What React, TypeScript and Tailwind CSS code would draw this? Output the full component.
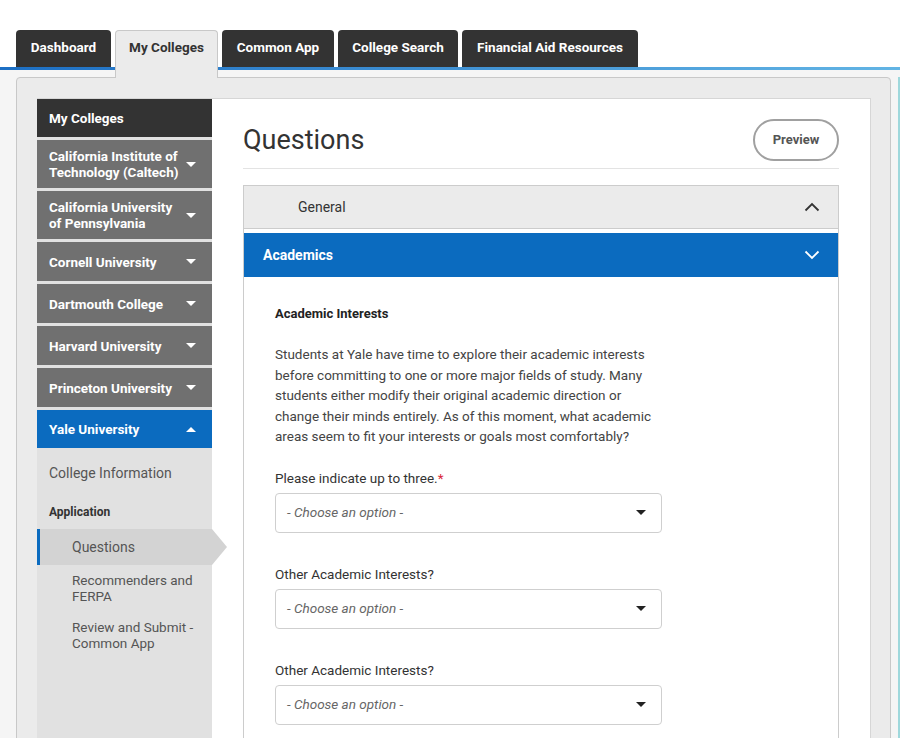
import React from "react";

const Caret = ({ up = false, color = "#ffffff" }: { up?: boolean; color?: string }) => (
  <svg width="10" height="5" viewBox="0 0 10 5" className="shrink-0">
    {up ? <path d="M0 5h10L5 0z" fill={color} /> : <path d="M0 0h10L5 5z" fill={color} />}
  </svg>
);

const Chevron = ({ up = false, color }: { up?: boolean; color: string }) => (
  <svg width="16" height="10" viewBox="0 0 16 10" className="shrink-0">
    {up ? (
      <polyline points="1.5,8.5 8,2 14.5,8.5" fill="none" stroke={color} strokeWidth="1.8" />
    ) : (
      <polyline points="1.5,1.5 8,8 14.5,1.5" fill="none" stroke={color} strokeWidth="1.8" />
    )}
  </svg>
);

const Select = () => (
  <div className="mt-[5px] w-[387px] h-[40px] border border-[#cfcfcf] rounded-[4px] bg-white flex items-center justify-between pl-[11px] pr-[15px]">
    <span className="italic text-[13.5px] text-[#666]">- Choose an option -</span>
    <Caret color="#222" />
  </div>
);

export default function App() {
  const tabs = [
    { label: "Dashboard", w: "w-[95px]" },
    { label: "My Colleges", w: "w-[103px]", active: true },
    { label: "Common App", w: "w-[112px]" },
    { label: "College Search", w: "w-[120px]" },
    { label: "Financial Aid Resources", w: "w-[176px]" },
  ];
  const colleges: { name: React.ReactNode; two?: boolean }[] = [
    { name: <>California Institute of<br />Technology (Caltech)</>, two: true },
    { name: <>California University<br />of Pennsylvania</>, two: true },
    { name: "Cornell University" },
    { name: "Dartmouth College" },
    { name: "Harvard University" },
    { name: "Princeton University" },
  ];
  return (
    <div className="w-[900px] h-[738px] overflow-hidden bg-[#f5f5f5] flex flex-col" style={{ fontFamily: "Roboto, 'Liberation Sans', sans-serif" }}>
      {/* Tabs */}
      <div className="shrink-0 bg-white pt-[30px]">
        <div className="flex items-start gap-[4px] pl-[16px] h-[37px]">
          {tabs.map((t) =>
            t.active ? (
              <div
                key={t.label}
                className={`${t.w} relative z-10 h-[48px] bg-[#ebebeb] border border-b-0 border-[#c8c8c8] rounded-t-[4px] text-center pt-[8px] text-[13.5px] leading-[16px] font-bold text-[#333]`}
              >
                {t.label}
              </div>
            ) : (
              <div
                key={t.label}
                className={`${t.w} h-[37px] bg-[#333333] rounded-t-[4px] text-center pt-[9px] text-[13.5px] leading-[16px] font-bold text-white`}
              >
                {t.label}
              </div>
            )
          )}
        </div>
      </div>
      <div className="shrink-0 h-[3px] bg-gradient-to-r from-[#1c6fc4] to-[#62b4e4]" />
      {/* Panel */}
      <div className="shrink-0 flex pt-[7px]">
        <div className="ml-[16px] w-[875px] h-[700px] bg-[#ebebeb] border border-[#c8c8c8] rounded-[4px] pt-[20px] pl-[20px] pr-[19px]">
          <div className="flex h-full border-t border-r border-[#d6d6d6] bg-white">
            {/* Sidebar */}
            <div className="w-[175px] shrink-0 bg-[#e1e1e1] flex flex-col relative z-10">
              <div className="h-[38px] bg-[#333333] flex items-center pl-[12px] text-[13.5px] font-bold text-white">My Colleges</div>
              {colleges.map((c, i) => (
                <div
                  key={i}
                  className={`mt-[3px] ${c.two ? "h-[48px]" : "h-[39px]"} bg-[#707070] flex items-center justify-between pl-[12px] pr-[16px] text-[13.5px] leading-[16px] font-bold text-white`}
                >
                  <span>{c.name}</span>
                  <Caret />
                </div>
              ))}
              <div className="mt-[3px] h-[38px] bg-[#0b6bbf] flex items-center justify-between pl-[12px] pr-[16px] text-[13.5px] font-bold text-white">
                <span>Yale University</span>
                <Caret up />
              </div>
              <div className="pl-[12px] pt-[17px] text-[14px] leading-[16px] text-[#555]">College Information</div>
              <div className="pl-[12px] mt-[23px] text-[12px] leading-[16px] font-bold text-[#333]">Application</div>
              <div className="relative mt-[9px] h-[36px] bg-[#d3d3d3] border-l-[3px] border-[#0b6bbf] flex items-center pl-[32px] text-[14px] text-[#555]">
                Questions
                <div className="absolute left-full top-0 w-0 h-0 border-y-[18px] border-y-transparent border-l-[15px] border-l-[#d3d3d3]" />
              </div>
              <div className="pl-[35px] mt-[7px] text-[13.5px] leading-[16px] text-[#555]">Recommenders and<br />FERPA</div>
              <div className="pl-[35px] mt-[15px] text-[13.5px] leading-[16px] text-[#555]">Review and Submit -<br />Common App</div>
            </div>
            {/* Content */}
            <div className="flex-1 pl-[31px] pr-[31px] pt-[20px]">
              <div className="flex items-center justify-between pb-[7px] border-b border-[#e3e3e3]">
                <h1 className="text-[27px] leading-[42px] text-[#333] font-normal">Questions</h1>
                <div className="w-[86px] h-[42px] rounded-full border-2 border-[#a0a0a0] flex items-center justify-center text-[13px] font-bold text-[#555]">Preview</div>
              </div>
              <div className="mt-[16px] border-x border-[#cccccc]">
                <div className="h-[44px] bg-[#ebebeb] border-y border-[#cccccc] flex items-center justify-between pl-[54px] pr-[18px] text-[14px] text-[#333]">
                  <span>General</span>
                  <Chevron up color="#333" />
                </div>
                <div className="h-[4px] bg-white" />
                <div className="h-[44px] bg-[#0b6bbf] flex items-center justify-between pl-[19px] pr-[18px] text-[14px] font-bold text-white">
                  <span>Academics</span>
                  <Chevron color="#fff" />
                </div>
                <div className="pl-[31px] pt-[27px] pb-[40px] bg-white">
                  <div className="text-[13px] leading-[20px] font-bold text-[#222]">Academic Interests</div>
                  <p className="mt-[20px] w-[390px] text-[13.5px] leading-[20.5px] text-[#444]">
                    Students at Yale have time to explore their academic interests before committing to one or more major fields of study. Many students either modify their original academic direction or change their minds entirely. As of this moment, what academic areas seem to fit your interests or goals most comfortably?
                  </p>
                  <div className="mt-[21px] text-[13.5px] leading-[20px] text-[#333]">
                    Please indicate up to three.<span className="text-[#d9263a]">*</span>
                  </div>
                  <Select />
                  <div className="mt-[31px] text-[13.5px] leading-[20px] text-[#333]">Other Academic Interests?</div>
                  <Select />
                  <div className="mt-[31px] text-[13.5px] leading-[20px] text-[#333]">Other Academic Interests?</div>
                  <Select />
                </div>
              </div>
            </div>
          </div>
        </div>
        <div className="ml-auto w-[2px] bg-[#9fd8dc]" />
      </div>
    </div>
  );
}
